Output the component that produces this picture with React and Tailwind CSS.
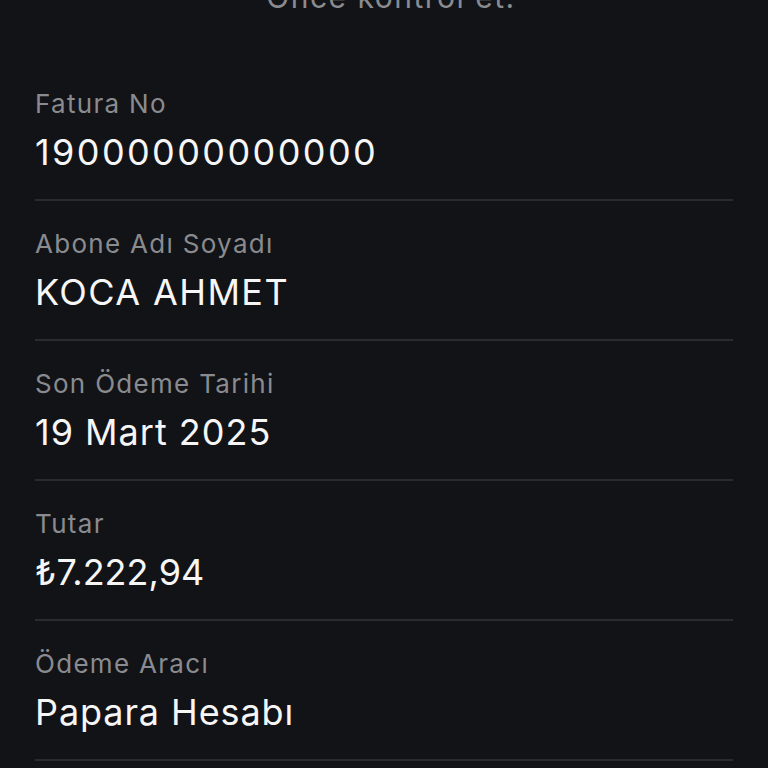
import React from 'react';

const rows = [
  { label: 'Fatura No', value: '19000000000000', track: 'tracking-[2.4px]' },
  { label: 'Abone Adı Soyadı', value: 'KOCA AHMET', track: 'tracking-[1.4px]' },
  { label: 'Son Ödeme Tarihi', value: '19 Mart 2025', track: 'tracking-[1px]' },
  { label: 'Tutar', value: '₺7.222,94', track: 'tracking-[0px]' },
  { label: 'Ödeme Aracı', value: 'Papara Hesabı', track: 'tracking-[0.9px]' },
];

const App = () => {
  return (
    <div
      className="min-h-screen w-full bg-[#121317] overflow-hidden flex flex-col"
      style={{ fontFamily: 'Inter, "Noto Sans", sans-serif' }}
    >
      <div className="-mt-[21px] mb-[46px] text-center text-[30px] leading-[36px] tracking-[1.5px] text-[#8a8b8f] pl-[14px]">
        Önce kontrol et.
      </div>
      <div className="px-[35px] flex flex-col">
        {rows.map((row) => (
          <div key={row.label} className="flex flex-col">
            <div className="pt-[27px] pb-[25px]">
              <div className="text-[26px] leading-[32px] tracking-[1.3px] text-[#8a8b8f]">{row.label}</div>
              <div className={`mt-[10px] text-[36px] leading-[44px] text-[#f6f6f7] ${row.track}`}>
                {row.value}
              </div>
            </div>
            <div className="h-[2px] bg-[#2a2b2f]" />
          </div>
        ))}
      </div>
    </div>
  );
};

export default App;
